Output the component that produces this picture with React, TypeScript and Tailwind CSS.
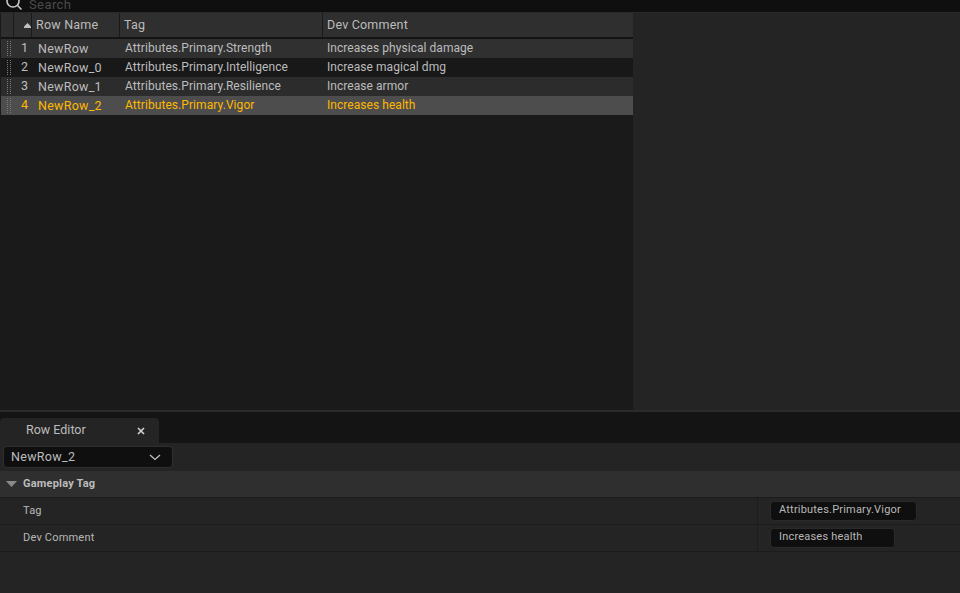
// App.tsx
import React from 'react';

const rows = [
    { name: 'NewRow', tag: 'Attributes.Primary.Strength', comment: 'Increases physical damage', bg: 'bg-[#303030]' },
    { name: 'NewRow_0', tag: 'Attributes.Primary.Intelligence', comment: 'Increase magical dmg', bg: 'bg-[#181818]' },
    { name: 'NewRow_1', tag: 'Attributes.Primary.Resilience', comment: 'Increase armor', bg: 'bg-[#2c2c2c]' },
    { name: 'NewRow_2', tag: 'Attributes.Primary.Vigor', comment: 'Increases health', bg: 'bg-[#4d4d4d]' },
];

const DragHandle = () => (
    <svg width="6" height="15" viewBox="0 0 6 15" className="ml-[6px] shrink-0">
        {[0, 2, 4, 6, 8, 10, 12, 14].map((y) => (
            <g key={y} fill="#7a7a7a">
                <rect x="0" y={y} width="1" height="1" />
                <rect x="3" y={y} width="1" height="1" />
            </g>
        ))}
    </svg>
);

const DataRow = ({ index, row }: { index: number; row: (typeof rows)[number] }) => {
    const selected = index === 4;
    return (
        <div className={`flex h-[19px] items-center text-[12px] ${row.bg} ${selected ? 'text-[#ffb800]' : 'text-[#bcbcbc]'}`}>
            <div className="flex w-[37px] shrink-0 items-center">
                <DragHandle />
                <span className="ml-[8px] w-[10px] text-[12.5px]">{index}</span>
            </div>
            <div className="w-[87px] shrink-0 pt-[2px] text-[12.5px] tracking-[0.25px]">{row.name}</div>
            <div className="w-[202px] shrink-0 whitespace-nowrap pb-[1px] tracking-[0.07px]">{row.tag}</div>
            <div className="whitespace-nowrap pb-[1px] tracking-[0.05px]">{row.comment}</div>
        </div>
    );
};

const PropertyRow = ({ label, value, width }: { label: string; value: string; width: string }) => (
    <div className="flex h-[27px] shrink-0 items-stretch border-b border-[#1c1c1c] text-[11px] tracking-[0.2px] text-[#b8b8b8]">
        <div className="flex w-[758px] shrink-0 items-center border-r border-[#1c1c1c] pl-[23px]">{label}</div>
        <div className="flex items-center pl-[12px]">
            <div className={`flex h-[20px] ${width} items-start rounded-[4px] border border-[#2a2a2a] bg-[#0f0f0f] pl-[8px] pt-[1px] leading-[14px]`}>
                {value}
            </div>
        </div>
    </div>
);

const App: React.FC = () => {
    return (
        <div className="flex h-[593px] w-[960px] flex-col overflow-hidden bg-[#242424] font-['Roboto',sans-serif]">
            {/* search box, cut off by the window top */}
            <div className="flex h-[13px] shrink-0 items-end overflow-hidden border-b border-[#2a2a2a] bg-[#0f0f0f]">
                <svg width="18" height="18" viewBox="0 0 18 18" fill="none" stroke="#c8c8c8" strokeWidth="1.6" className="ml-[5px] shrink-0">
                    <circle cx="8" cy="7" r="6" />
                    <path d="M12.5 11.5 16.5 15.5" />
                </svg>
                <span className="mb-[1px] ml-[6px] text-[13px] leading-[13px] tracking-[0.4px] text-[#4a4a4a]">Search</span>
            </div>

            {/* table + details side */}
            <div className="flex h-[397px] shrink-0">
                <div className="flex w-[633px] shrink-0 flex-col bg-[#1a1a1a] pl-[1px]">
                    <div className="flex h-[24px] shrink-0 items-stretch bg-[#2f2f2f] text-[12.5px] tracking-[0.2px] text-[#bcbcbc]">
                        <div className="w-[13px] shrink-0 border-r border-[#1a1a1a]" />
                        <div className="flex w-[18px] shrink-0 items-center justify-end border-r border-[#1a1a1a]">
                            <svg width="7" height="5" viewBox="0 0 7 5">
                                <path d="M3.5 0 7 3.5V5H0V3.5Z" fill="#c0c0c0" />
                            </svg>
                        </div>
                        <div className="flex w-[88px] shrink-0 items-center border-r border-[#1a1a1a] pl-[4px]">Row Name</div>
                        <div className="flex w-[203px] shrink-0 items-center border-r border-[#1a1a1a] pl-[4px]">Tag</div>
                        <div className="flex items-center pl-[4px]">Dev Comment</div>
                    </div>
                    <div className="h-[2px] shrink-0 bg-[#141414]" />
                    {rows.map((row, i) => (
                        <DataRow key={row.name} index={i + 1} row={row} />
                    ))}
                </div>
                <div className="flex-1 bg-[#242424]" />
            </div>

            {/* splitter */}
            <div className="h-[2px] shrink-0 bg-[#2b2b2b]" />

            {/* tab strip */}
            <div className="flex h-[31px] shrink-0 items-end bg-[#141414]">
                <div className="flex h-[25px] w-[159px] items-center justify-between rounded-tl-[4px] rounded-tr-[4px] bg-[#242424] pl-[26px] pr-[14px] text-[12.5px] text-[#bcbcbc]">
                    <span>Row Editor</span>
                    <svg width="8" height="8" viewBox="0 0 8 8" stroke="#d0d0d0" strokeWidth="1.7">
                        <path d="M1 1 7 7M7 1 1 7" />
                    </svg>
                </div>
            </div>

            {/* row editor */}
            <div className="flex flex-1 flex-col bg-[#242424]">
                <div className="flex h-[28px] shrink-0 items-center pl-[3px]">
                    <div className="flex h-[22px] w-[170px] items-center justify-between rounded-[4px] border border-[#2f2f2f] bg-[#0f0f0f] pl-[7px] pr-[11px] text-[12.5px] tracking-[0.3px] text-[#bcbcbc]">
                        <span>NewRow_2</span>
                        <svg width="12" height="7" viewBox="0 0 12 7" fill="none" stroke="#c0c0c0" strokeWidth="1.3">
                            <path d="M1 1 6 5.5 11 1" />
                        </svg>
                    </div>
                </div>
                <div className="flex h-[27px] shrink-0 items-center border-b border-[#1c1c1c] bg-[#2f2f2f] pl-[6px] text-[11px] font-bold tracking-[0.2px] text-[#bcbcbc]">
                    <svg width="11" height="6" viewBox="0 0 11 6" className="mr-[6px]">
                        <path d="M0 0H11L5.5 6Z" fill="#8a8a8a" />
                    </svg>
                    Gameplay Tag
                </div>
                <PropertyRow label="Tag" value="Attributes.Primary.Vigor" width="w-[147px]" />
                <PropertyRow label="Dev Comment" value="Increases health" width="w-[125px]" />
            </div>
        </div>
    );
};

export default App;
